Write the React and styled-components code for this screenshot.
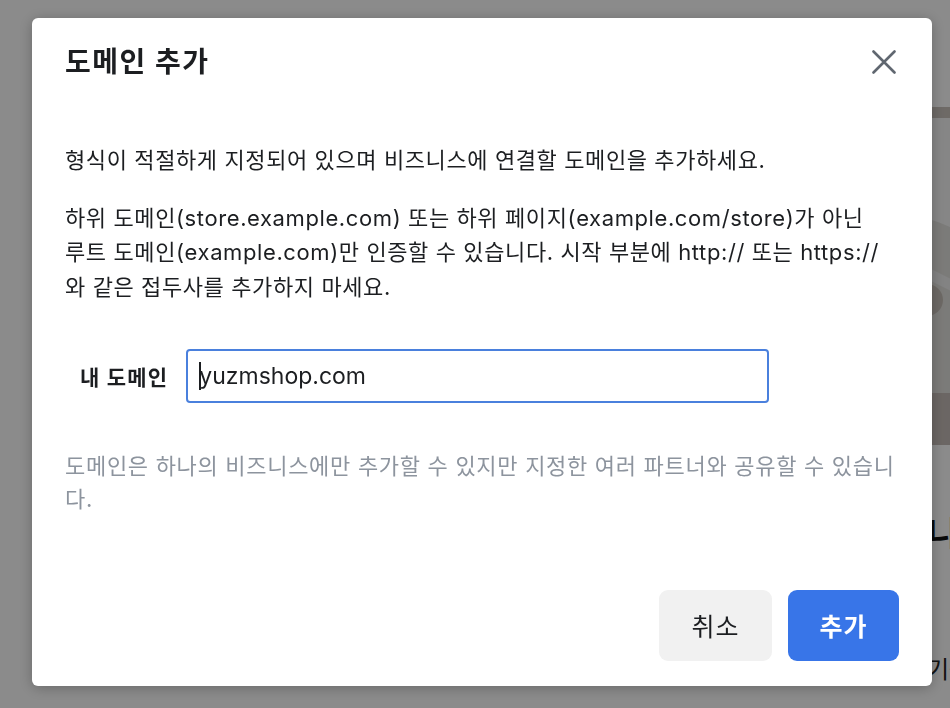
import React, { useEffect, useRef } from 'react'
import styled, { createGlobalStyle } from 'styled-components'

const GlobalStyle = createGlobalStyle`
  html, body {
    margin: 0;
    padding: 0;
  }
  body {
    font-family: Inter, "Noto Sans CJK KR", sans-serif;
    background: #fdfdfd;
    overflow: hidden;
  }
`

const Page = styled.div`
  width: 100vw;
  height: 100vh;
  overflow: hidden;
  padding-left: 927px;
  box-sizing: border-box;
`

const Hero = styled.svg`
  display: block;
  margin-top: 107px;
`

const PageHeading = styled.div`
  margin-top: 72px;
  font-size: 34px;
  line-height: 34px;
  font-weight: 700;
  color: #111;
  white-space: nowrap;
`

const PageText = styled.div`
  margin-top: 106px;
  font-size: 24px;
  line-height: 26px;
  color: #222;
  white-space: nowrap;
`

const Overlay = styled.div`
  position: fixed;
  inset: 0;
  background: rgba(0, 0, 0, 0.45);
  display: flex;
  align-items: flex-start;
  padding: 18px 0 0 32px;
`

const Modal = styled.div`
  width: 900px;
  box-sizing: border-box;
  background: #fff;
  border-radius: 6px;
  box-shadow: 0 2px 14px rgba(0, 0, 0, 0.25);
  padding: 26px 33px 25px;
  display: flex;
  flex-direction: column;
  color: #1c1e21;
`

const Header = styled.div`
  display: flex;
  align-items: center;
  justify-content: space-between;
  height: 36px;
`

const Title = styled.h2`
  margin: 0;
  font-size: 28px;
  letter-spacing: 1.5px;
  line-height: 36px;
  font-weight: 700;
  color: #1c1e21;
`

const CloseButton = styled.button`
  width: 30px;
  height: 30px;
  padding: 0;
  border: none;
  background: none;
  display: flex;
  align-items: center;
  justify-content: center;
  cursor: pointer;
`

const Paragraph = styled.p`
  margin: ${p => p.$top}px 0 0;
  font-size: 22px;
  letter-spacing: 0.6px;
  line-height: 34.65px;
  color: #1c1e21;
  white-space: nowrap;
`

const FieldRow = styled.div`
  display: flex;
  align-items: center;
  gap: 18px;
  margin-top: 44px;
  padding-left: 15px;
`

const Label = styled.label`
  font-size: 21px;
  letter-spacing: 1.2px;
  font-weight: 700;
  color: #1c1e21;
  white-space: nowrap;
`

const InputWrap = styled.div`
  position: relative;
  display: flex;
`

const Input = styled.input`
  width: 583px;
  height: 54px;
  box-sizing: border-box;
  border: 2px solid #4a80dd;
  border-radius: 4px;
  padding: 0 11px;
  font-family: Inter, "Noto Sans CJK KR", sans-serif;
  font-size: 23px;
  color: #1c1e21;
  outline: none;
  caret-color: transparent;
`

const Caret = styled.span`
  position: absolute;
  left: 13px;
  top: 13px;
  width: 1.5px;
  height: 28px;
  background: #1c1e21;
  pointer-events: none;
`

const Help = styled.p`
  margin: 47px 0 0;
  font-size: 22px;
  letter-spacing: 0.7px;
  line-height: 33px;
  color: #8d949e;
  white-space: nowrap;
`

const Footer = styled.div`
  display: flex;
  justify-content: flex-end;
  gap: 16px;
  margin-top: 74px;
`

const Button = styled.button`
  height: 71px;
  width: ${p => (p.$primary ? 111 : 113)}px;
  border: none;
  border-radius: 9px;
  background: ${p => (p.$primary ? '#3875e8' : '#f1f1f1')};
  color: ${p => (p.$primary ? '#fff' : '#1c1e21')};
  font-family: Inter, "Noto Sans CJK KR", sans-serif;
  font-size: 25px;
  letter-spacing: 1px;
  font-weight: ${p => (p.$primary ? 700 : 400)};
  cursor: pointer;
`

function CloseIcon() {
  return (
    <svg width="24" height="24" viewBox="0 0 24 24">
      <path
        d="M1.5 1.5 L22.5 22.5 M22.5 1.5 L1.5 22.5"
        stroke="#606770"
        strokeWidth="2.6"
        strokeLinecap="round"
        fill="none"
      />
    </svg>
  )
}

export default function App() {
  const inputRef = useRef(null)

  useEffect(() => {
    const el = inputRef.current
    if (el) {
      el.focus()
      el.setSelectionRange(0, 0)
    }
  }, [])

  return (
    <>
      <GlobalStyle />
      <Page>
        <Hero width="120" height="338" viewBox="0 0 120 338">
          <rect x="0" y="0" width="120" height="11" fill="#c8c1bb" />
          <rect x="0" y="11" width="120" height="275" fill="#f5f5f5" />
          <path d="M0 112 Q40 120 120 190 L120 286 L0 286 Z" fill="#e1e0dc" />
          <path d="M0 160 L120 220 L120 232 L0 172 Z" fill="#eeeeee" />
          <circle cx="0" cy="193" r="16" fill="#c6bfb8" />
          <rect x="0" y="286" width="120" height="52" fill="#c4bbb6" />
        </Hero>
        <PageHeading>니스</PageHeading>
        <PageText>기능</PageText>
      </Page>
      <Overlay>
        <Modal role="dialog" aria-labelledby="add-domain-title">
          <Header>
            <Title id="add-domain-title">도메인 추가</Title>
            <CloseButton aria-label="닫기">
              <CloseIcon />
            </CloseButton>
          </Header>
          <Paragraph $top={63}>
            형식이 적절하게 지정되어 있으며 비즈니스에 연결할 도메인을 추가하세요.
          </Paragraph>
          <Paragraph $top={23}>
            하위 도메인(store.example.com) 또는 하위 페이지(example.com/store)가 아닌
            <br />
            루트 도메인(example.com)만 인증할 수 있습니다. 시작 부분에 http:// 또는 https://
            <br />
            와 같은 접두사를 추가하지 마세요.
          </Paragraph>
          <FieldRow>
            <Label htmlFor="my-domain">내 도메인</Label>
            <InputWrap>
              <Input id="my-domain" ref={inputRef} defaultValue="yuzmshop.com" />
              <Caret />
            </InputWrap>
          </FieldRow>
          <Help>
            도메인은 하나의 비즈니스에만 추가할 수 있지만 지정한 여러 파트너와 공유할 수 있습니
            <br />
            다.
          </Help>
          <Footer>
            <Button>취소</Button>
            <Button $primary>추가</Button>
          </Footer>
        </Modal>
      </Overlay>
    </>
  )
}
